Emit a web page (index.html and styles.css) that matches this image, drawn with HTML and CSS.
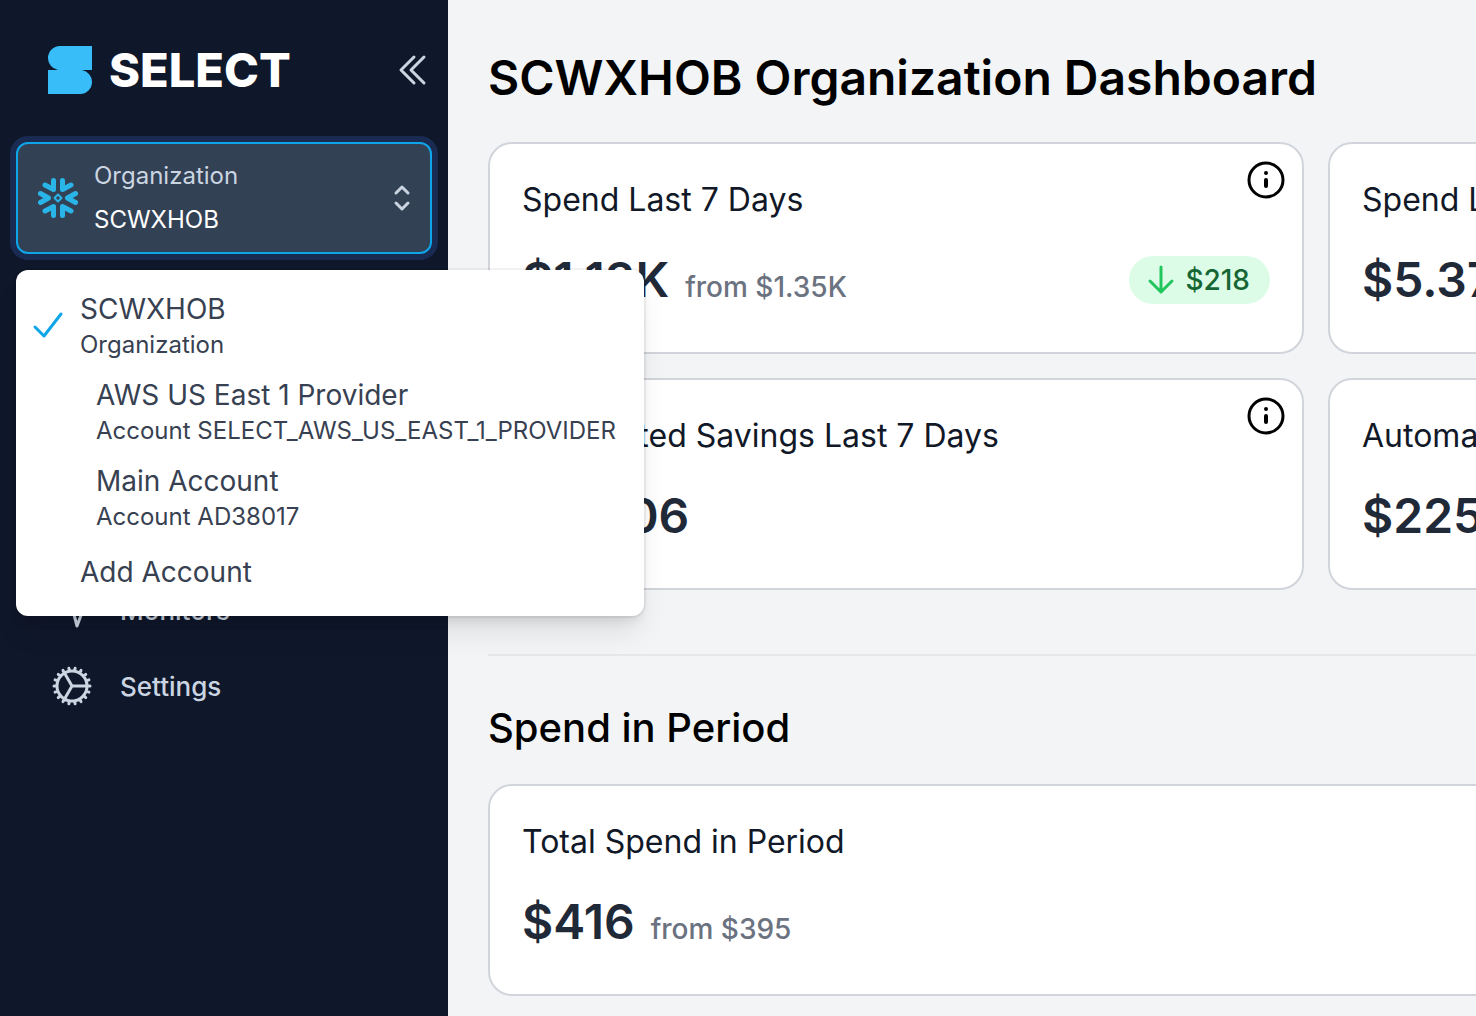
FILE: index.html
```html
<!DOCTYPE html>
<html lang="en">

<head>
    <meta charset="UTF-8">
    <meta name="viewport" content="width=device-width, initial-scale=1.0">
    <title>SELECT - Organization Dashboard</title>
    <link rel="stylesheet" href="styles.css">
</head>

<body>
    <div class="layout">
        <aside class="sidebar">
            <div class="sidebar-header">
                <a href="#" class="logo">
                    <svg class="logo-mark" viewBox="0 0 44 48" aria-hidden="true">
                        <path d="M12 0H44V24H34A12 12 0 0 1 44 36A12 12 0 0 1 32 48H0V24H10A12 12 0 0 1 0 12A12 12 0 0 1 12 0Z" />
                    </svg>
                    <span class="logo-text">SELECT</span>
                </a>
                <button type="button" class="collapse" aria-label="Collapse sidebar">
                    <svg viewBox="0 0 40 40" aria-hidden="true">
                        <path d="M22 7 9 20l13 13M32 7 19 20l13 13" />
                    </svg>
                </button>
            </div>

            <div class="org">
                <button type="button" class="org-button" aria-haspopup="listbox" aria-expanded="true">
                    <svg class="snowflake" viewBox="0 0 40 40" aria-hidden="true">
                        <g class="arms">
                            <path d="M15.500 2.500V11.500L7 7" />
                            <path d="M24.500 2.500V11.500L33 7" />
                            <path d="M15.500 37.500V28.500L7 33" />
                            <path d="M24.500 37.500V28.500L33 33" />
                            <path d="M2.500 15.500L10.500 20L2.500 24.500" />
                            <path d="M37.500 15.500L29.500 20L37.500 24.500" />
                        </g>
                        <path class="core" d="M20 16.500L23.500 20L20 23.500L16.500 20Z" />
                    </svg>
                    <span class="org-names">
                        <span class="org-type">Organization</span>
                        <span class="org-name">SCWXHOB</span>
                    </span>
                    <svg class="updown" viewBox="0 0 20 30" aria-hidden="true">
                        <path d="M4 10l6-6 6 6M4 20l6 6 6-6" />
                    </svg>
                </button>

                <ul class="menu" role="listbox">
                    <li class="menu-item" role="option" aria-selected="true">
                        <svg class="check" viewBox="0 0 32 32" aria-hidden="true">
                            <path d="M3 18l9 9L29 5" />
                        </svg>
                        <span class="menu-name">SCWXHOB</span>
                        <span class="menu-sub">Organization</span>
                    </li>
                    <li class="menu-item nested" role="option">
                        <span class="menu-name">AWS US East 1 Provider</span>
                        <span class="menu-sub">Account SELECT_AWS_US_EAST_1_PROVIDER</span>
                    </li>
                    <li class="menu-item nested" role="option">
                        <span class="menu-name">Main Account</span>
                        <span class="menu-sub">Account AD38017</span>
                    </li>
                    <li class="menu-item add">
                        <a href="#" class="menu-name">Add Account</a>
                    </li>
                </ul>
            </div>

            <nav class="nav">
                <a href="#" class="nav-link">
                    <svg viewBox="0 0 48 48" aria-hidden="true">
                        <path d="M5 24h8l7-18 9 34 6-16h8" />
                    </svg>
                    Monitors
                </a>
                <a href="#" class="nav-link">
                    <svg viewBox="0 0 24 24" aria-hidden="true">
                        <path d="M4.500 12a7.500 7.500 0 0 0 15 0m-15 0a7.500 7.500 0 1 1 15 0m-15 0H3m16.500 0H21m-1.500 0H12m-8.457 3.077 1.410-.513m14.095-5.130 1.410-.513M5.106 17.785l1.150-.964m11.490-9.642 1.149-.964M7.501 19.795l.750-1.300m7.500-12.990.750-1.300m-6.063 16.658.260-1.477m2.605-14.772.260-1.477m0 17.726-.260-1.477M10.698 4.614l-.260-1.477M16.500 19.794l-.750-1.299M7.500 4.205 12 12m6.894 5.785-1.149-.964M6.256 7.178l-1.150-.964m15.352 8.864-1.410-.513M4.954 9.435l-1.410-.514M12.002 12l-3.750 6.495" />
                    </svg>
                    Settings
                </a>
            </nav>
        </aside>

        <main class="main">
            <div class="content">
                <h1>SCWXHOB Organization Dashboard</h1>

                <div class="cards">
                    <section class="card">
                        <button type="button" class="info" aria-label="More information">
                            <svg viewBox="0 0 48 48" aria-hidden="true">
                                <circle cx="24" cy="24" r="17" />
                                <path d="M24 24v6M24 17v.1" />
                            </svg>
                        </button>
                        <h3>Spend Last 7 Days</h3>
                        <div class="card-row">
                            <span class="value">$1.13K</span>
                            <span class="from">from $1.35K</span>
                            <span class="pill">
                                <svg viewBox="0 0 28 32" aria-hidden="true">
                                    <path d="M14 3v25M3 17l11 11 11-11" />
                                </svg>
                                $218
                            </span>
                        </div>
                    </section>
                    <section class="card">
                        <h3>Spend Last 30 Days</h3>
                        <div class="card-row">
                            <span class="value">$5.37K</span>
                        </div>
                    </section>
                    <section class="card">
                        <button type="button" class="info" aria-label="More information">
                            <svg viewBox="0 0 48 48" aria-hidden="true">
                                <circle cx="24" cy="24" r="17" />
                                <path d="M24 24v6M24 17v.1" />
                            </svg>
                        </button>
                        <h3>Automated Savings Last 7 Days</h3>
                        <div class="card-row">
                            <span class="value">$53.06</span>
                        </div>
                    </section>
                    <section class="card">
                        <h3>Automated Savings Last 30 Days</h3>
                        <div class="card-row">
                            <span class="value">$225</span>
                        </div>
                    </section>
                </div>

                <hr>

                <h2>Spend in Period</h2>
                <div class="cards">
                    <section class="card wide">
                        <h3>Total Spend in Period</h3>
                        <div class="card-row">
                            <span class="value">$416</span>
                            <span class="from">from $395</span>
                        </div>
                    </section>
                </div>
            </div>
        </main>
    </div>
</body>

</html>
```
FILE: styles.css
```css
* {
    box-sizing: border-box;
}

body {
    margin: 0;
    font-family: Inter, "Liberation Sans", sans-serif;
    background-color: #f3f4f6;
    color: #000;
}

h1,
h2,
h3,
ul {
    margin: 0;
    padding: 0;
}

a {
    color: inherit;
    text-decoration: none;
}

button {
    font-family: inherit;
    border: none;
    padding: 0;
    background: none;
    cursor: pointer;
}

svg {
    display: block;
    flex-shrink: 0;
    fill: none;
    stroke: currentColor;
    stroke-linecap: round;
    stroke-linejoin: round;
}

.layout {
    display: flex;
    min-height: 100vh;
}

/* Sidebar */
.sidebar {
    width: 448px;
    flex-shrink: 0;
    padding: 40px 16px;
    background-color: #0f172a;
    color: #cbd5e1;
}

.sidebar-header {
    display: flex;
    align-items: center;
    justify-content: space-between;
    height: 60px;
    padding-left: 32px;
    margin-bottom: 42px;
}

.logo {
    display: flex;
    align-items: center;
    gap: 17px;
}

.logo-mark {
    width: 44px;
    height: 48px;
    fill: #38bdf8;
    stroke: none;
}

.logo-text {
    color: #fff;
    font-size: 47px;
    font-weight: 800;
    line-height: 60px;
}

.collapse {
    color: #cbd5e1;
}

.collapse svg {
    width: 40px;
    height: 40px;
    stroke-width: 3;
}

/* Organization picker */
.org {
    position: relative;
}

.org-button {
    display: flex;
    align-items: center;
    width: 100%;
    height: 112px;
    padding: 0 18px 0 20px;
    border: 2px solid #0ea5e9;
    border-radius: 12px;
    background-color: #334155;
    box-shadow: 0 0 0 6px #1a2b52;
    text-align: left;
}

.snowflake {
    width: 40px;
    height: 40px;
    margin-right: 16px;
    color: #29b5e8;
}

.snowflake .arms {
    stroke-width: 5;
}

.snowflake .core {
    stroke-width: 2;
}

.org-names {
    display: flex;
    flex-direction: column;
    flex-grow: 1;
    font-size: 24px;
    line-height: 44px;
}

.org-type {
    color: #cbd5e1;
}

.org-name {
    color: #fff;
}

.updown {
    width: 20px;
    height: 30px;
    color: #cbd5e1;
    stroke-width: 3;
}

.menu {
    position: absolute;
    top: 128px;
    left: 0;
    z-index: 10;
    width: max-content;
    padding: 14px 0;
    border-radius: 12px;
    background-color: #fff;
    box-shadow: 0 0 0 2px rgba(0, 0, 0, 0.05), 0 20px 30px -6px rgba(0, 0, 0, 0.1), 0 8px 12px -4px rgba(0, 0, 0, 0.1);
    color: #374151;
    list-style: none;
}

.menu-item {
    position: relative;
    display: flex;
    flex-direction: column;
    padding: 8px 28px 8px 64px;
    line-height: 35px;
    cursor: pointer;
}

.menu-item.nested {
    padding-left: 80px;
}

.menu-item.add {
    padding-top: 13px;
    padding-bottom: 12px;
}

.menu-name {
    font-size: 28px;
}

.menu-sub {
    font-size: 24px;
}

.check {
    position: absolute;
    top: 25px;
    left: 16px;
    width: 32px;
    height: 32px;
    color: #0ea5e9;
    stroke-width: 3;
}

.nav {
    display: flex;
    flex-direction: column;
    gap: 8px;
    margin-top: 322px;
}

.nav-link {
    display: flex;
    align-items: center;
    gap: 24px;
    height: 68px;
    padding-left: 32px;
    font-size: 26px;
    font-weight: 500;
}

.nav-link svg {
    width: 48px;
    height: 48px;
    stroke-width: 3;
}

.nav-link:last-child svg {
    stroke-width: 1.5;
}

/* Dashboard */
.main {
    flex-grow: 1;
    min-width: 0;
    overflow: hidden;
    padding: 48px 40px 20px;
}

/* two cards plus the gap, the rest is clipped on narrow windows */
.content {
    min-width: 1656px;
}

h1 {
    font-size: 48px;
    font-weight: 600;
    line-height: 60px;
    margin-bottom: 34px;
}

h2 {
    font-size: 40px;
    font-weight: 500;
    line-height: 56px;
    margin-bottom: 28px;
}

hr {
    margin: 64px 0 44px;
    border: none;
    border-top: 2px solid #e5e7eb;
}

.cards {
    display: grid;
    grid-template-columns: repeat(2, 1fr);
    gap: 24px;
}

.card {
    position: relative;
    padding: 32px 32px 40px;
    border: 2px solid #d1d5db;
    border-radius: 24px;
    background-color: #fff;
}

.card.wide {
    grid-column: span 2;
}

h3 {
    font-size: 32px;
    font-weight: 400;
    line-height: 48px;
    margin-bottom: 24px;
    color: #111827;
}

.card-row {
    display: flex;
    align-items: baseline;
    gap: 16px;
    height: 64px;
    line-height: 64px;
}

.value {
    font-size: 48px;
    font-weight: 600;
    color: #1f2937;
}

.from {
    font-size: 28px;
    font-weight: 500;
    color: #6b7280;
}

.pill {
    display: flex;
    align-items: center;
    align-self: center;
    gap: 10px;
    height: 48px;
    margin-left: auto;
    padding: 0 20px 0 18px;
    border-radius: 24px;
    background-color: #dcfce7;
    color: #166534;
    font-size: 28px;
    font-weight: 500;
}

.pill svg {
    width: 28px;
    height: 32px;
    color: #22c55e;
    stroke-width: 3;
}

.info {
    position: absolute;
    top: 12px;
    right: 12px;
    color: #000;
}

.info svg {
    width: 48px;
    height: 48px;
    stroke-width: 3;
}

.info path {
    stroke-width: 4;
}
```
